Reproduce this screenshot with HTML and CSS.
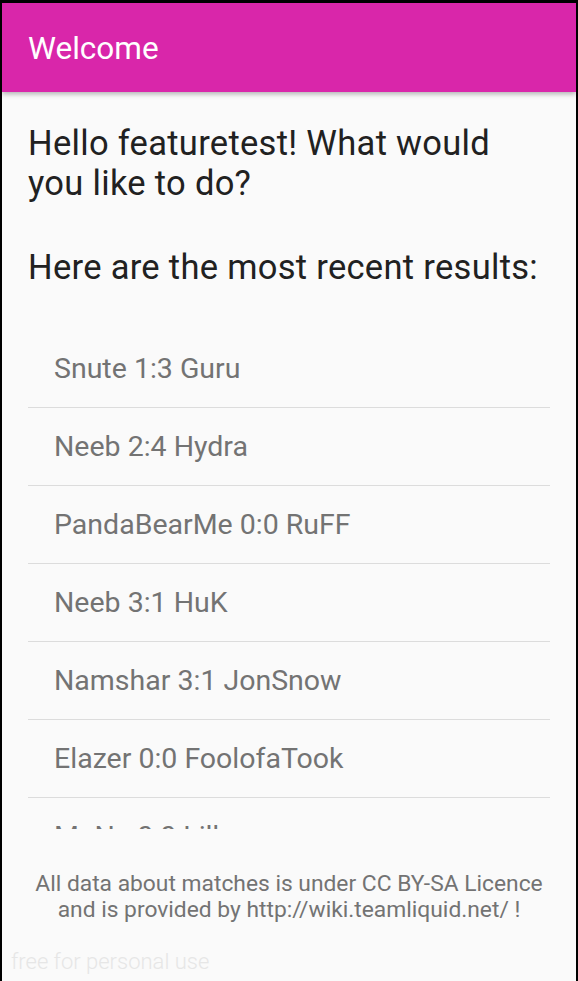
FILE: index.html
```html
<!DOCTYPE html>
<html>
<head>
<meta charset="utf-8">
<link rel="stylesheet" href="styles.css">
</head>
<body>
<div class="screen">
  <header class="appbar"><span class="title">Welcome</span></header>
  <main class="content">
    <p class="greeting">Hello featuretest! What would you like to do?</p>
    <p class="subhead">Here are the most recent results:</p>
    <ul class="results">
      <li>Snute 1:3 Guru</li>
      <li>Neeb 2:4 Hydra</li>
      <li>PandaBearMe 0:0 RuFF</li>
      <li>Neeb 3:1 HuK</li>
      <li>Namshar 3:1 JonSnow</li>
      <li>Elazer 0:0 FoolofaTook</li>
      <li>MaNa 0:0 Lilbow</li>
    </ul>
    <p class="footer">All data about matches is under CC BY-SA Licence and is provided by http://wiki.teamliquid.net/ !</p>
  </main>
  <div class="watermark">free for personal use</div>
</div>
</body>
</html>
```

FILE: styles.css
```css
html, body {
  margin: 0;
  padding: 0;
  height: 100%;
}
body {
  background: #000;
  font-family: Roboto, "Noto Sans", sans-serif;
}
.screen {
  position: relative;
  margin: 3px 2px 0 2px;
  height: 978px;
  background: #fafafa;
  display: flex;
  flex-direction: column;
  overflow: hidden;
}
.appbar {
  height: 89px;
  flex: none;
  background: #d926aa;
  display: flex;
  align-items: center;
  padding-left: 26px;
  padding-top: 3px;
  box-sizing: border-box;
  box-shadow: 0 2px 5px rgba(0, 0, 0, 0.3);
  position: relative;
  z-index: 1;
}
.title {
  color: #fff;
  font-size: 31.5px;
  line-height: 36px;
}
.content {
  flex: 1;
  display: flex;
  flex-direction: column;
  padding: 0 26px;
}
.greeting {
  margin: 31px 0 0 0;
  font-size: 34.5px;
  line-height: 40px;
  letter-spacing: 0.3px;
  color: #212121;
}
.subhead {
  margin: 44px 0 0 0;
  font-size: 34.5px;
  line-height: 40px;
  letter-spacing: 0.3px;
  color: #212121;
}
.results {
  list-style: none;
  margin: 43px 0 0 0;
  padding: 0;
  height: 499px;
  overflow: hidden;
  flex: none;
}
.results li {
  height: 77px;
  border-bottom: 1px solid #dcdcdc;
  display: flex;
  align-items: center;
  padding-left: 26px;
  font-size: 28.5px;
  color: #737373;
}
.footer {
  margin: 42px 0 0 0;
  text-align: center;
  font-size: 22.8px;
  line-height: 26px;
  color: #737373;
}
.watermark {
  position: absolute;
  left: 9px;
  bottom: 7px;
  font-size: 22px;
  font-weight: 300;
  color: #e6e6e6;
}
```
